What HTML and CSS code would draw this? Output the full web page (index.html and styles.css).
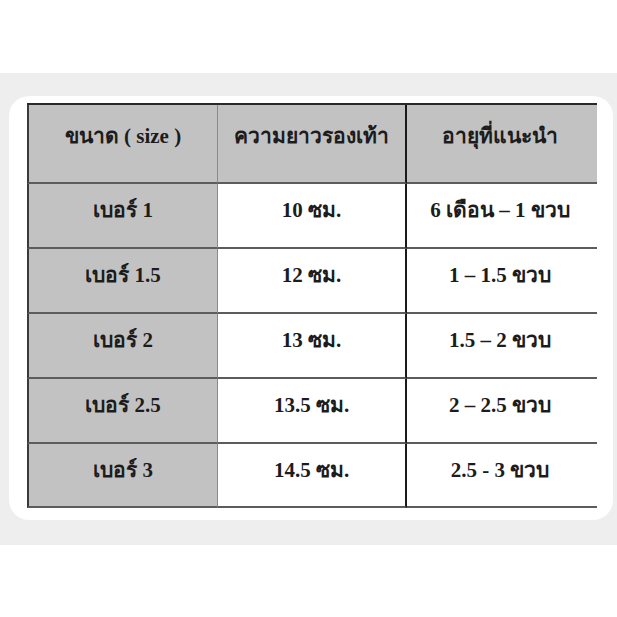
FILE: index.html
```html
<!DOCTYPE html>
<html lang="th">
<head>
<meta charset="utf-8">
<link rel="stylesheet" href="styles.css">
</head>
<body>
<div class="band">
  <div class="card">
    <div class="table">
      <div class="cell head c1">ขนาด ( size )</div>
      <div class="cell head c2">ความยาวรองเท้า</div>
      <div class="cell head c3">อายุที่แนะนำ</div>

      <div class="cell c1">เบอร์ 1</div>
      <div class="cell c2">10 ซม.</div>
      <div class="cell c3">6 เดือน – 1 ขวบ</div>

      <div class="cell c1">เบอร์ 1.5</div>
      <div class="cell c2">12 ซม.</div>
      <div class="cell c3">1 – 1.5 ขวบ</div>

      <div class="cell c1">เบอร์ 2</div>
      <div class="cell c2">13 ซม.</div>
      <div class="cell c3">1.5 – 2 ขวบ</div>

      <div class="cell c1">เบอร์ 2.5</div>
      <div class="cell c2">13.5 ซม.</div>
      <div class="cell c3">2 – 2.5 ขวบ</div>

      <div class="cell c1 last">เบอร์ 3</div>
      <div class="cell c2 last">14.5 ซม.</div>
      <div class="cell c3 last">2.5 - 3 ขวบ</div>
    </div>
  </div>
</div>
</body>
</html>
```

FILE: styles.css
```css
html, body {
  margin: 0;
  padding: 0;
  background: #ffffff;
}
body {
  width: 617px;
  height: 617px;
  overflow: hidden;
  font-family: "Liberation Serif", "Times New Roman", serif;
}
.band {
  margin-top: 73px;
  height: 472px;
  background: #eeeeee;
  padding-top: 23px;
  box-sizing: border-box;
}
.card {
  margin: 0 4px 0 9px;
  height: 424px;
  background: #ffffff;
  border-radius: 20px;
  padding: 7px 16px 0 18px;
  box-sizing: border-box;
}
.table {
  display: grid;
  grid-template-columns: 191px 189px 190px;
  grid-template-rows: 79px 65px 65px 65px 65px 64px;
  border-top: 2px solid #2a2a2a;
}
.cell {
  box-sizing: border-box;
  text-align: center;
  font-weight: bold;
  font-size: 21px;
  color: #1c1c1c;
  padding-top: 14px;
  border-bottom: 2px solid #5c5c5c;
  line-height: 24px;
}
.cell.head {
  padding-top: 19px;
  background: #c2c2c2;
}
.cell.c1 {
  background: #c2c2c2;
  border-left: 2px solid #3a3a3a;
  border-right: 1px solid #8a8a8a;
}
.cell.c2 {
  border-right: 2px solid #1a1a1a;
}
.cell.c3 {
  padding-right: 4px;
}
```
